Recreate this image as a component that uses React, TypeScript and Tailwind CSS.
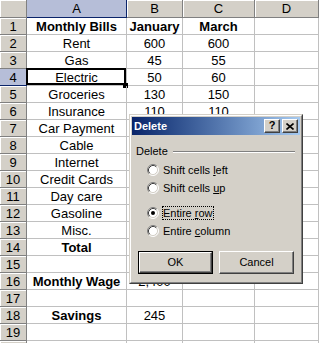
import React from "react";

type Row = { a: string; b?: string; c?: string; bold?: boolean };

const rows: Row[] = [
  { a: "Monthly Bills", b: "January", c: "March", bold: true },
  { a: "Rent", b: "600", c: "600" },
  { a: "Gas", b: "45", c: "55" },
  { a: "Electric", b: "50", c: "60" },
  { a: "Groceries", b: "130", c: "150" },
  { a: "Insurance", b: "110", c: "110" },
  { a: "Car Payment" },
  { a: "Cable" },
  { a: "Internet" },
  { a: "Credit Cards" },
  { a: "Day care" },
  { a: "Gasoline" },
  { a: "Misc." },
  { a: "Total", bold: true },
  { a: "" },
  { a: "Monthly Wage", b: "2,400", bold: true },
  { a: "" },
  { a: "Savings", b: "245", bold: true },
  { a: "" },
  { a: "" },
];

const cell = "box-border h-full border-r border-b border-[#c0c0c0] flex items-center justify-center whitespace-nowrap";
const head = "box-border h-full border-r border-b border-[#808080] bg-[#d4d0c8] shadow-[inset_1px_1px_0_#ffffff] flex items-center justify-center";
const headSel = "box-border h-full border-r border-b border-[#0a246a] bg-[#b6bed8] flex items-center justify-center";

function Radio({ checked }: { checked?: boolean }) {
  return (
    <svg width="12" height="12" viewBox="0 0 12 12" className="shrink-0">
      <circle cx="6" cy="6" r="5" fill="#ffffff" />
      <path d="M2.11 9.89 A5.5 5.5 0 0 1 9.89 2.11" fill="none" stroke="#808080" />
      <path d="M9.89 2.11 A5.5 5.5 0 0 1 2.11 9.89" fill="none" stroke="#ffffff" />
      <path d="M2.82 9.18 A4.5 4.5 0 0 1 9.18 2.82" fill="none" stroke="#404040" />
      <path d="M9.18 2.82 A4.5 4.5 0 0 1 2.82 9.18" fill="none" stroke="#d4d0c8" />
      {checked && <circle cx="6" cy="6" r="2" fill="#000000" />}
    </svg>
  );
}

function Option({ children, checked, focus }: { children: React.ReactNode; checked?: boolean; focus?: boolean }) {
  return (
    <div className="flex h-[16px] items-center gap-[3px] pl-[15px]">
      <Radio checked={checked} />
      <span
        className={
          "border leading-[12px] " + (focus ? "border-dotted border-black" : "border-transparent")
        }
      >
        {children}
      </span>
    </div>
  );
}

function DeleteDialog() {
  return (
    <div className="absolute left-[129px] top-[114px] w-[174px] h-[170px] border border-t-[#d4d0c8] border-l-[#d4d0c8] border-r-[#404040] border-b-[#404040] font-['Liberation_Sans',Arial,sans-serif] text-[11px] text-black">
      <div className="h-full border border-t-white border-l-white border-r-[#808080] border-b-[#808080] bg-[#d4d0c8] p-px flex flex-col">
        {/* Title bar */}
        <div className="h-[18px] shrink-0 flex items-center justify-between bg-gradient-to-r from-[#0a246a] to-[#a6caf0] pl-[2px] pr-[2px]">
          <span className="font-bold text-white leading-none">Delete</span>
          <div className="flex gap-[2px]">
            <div className="w-[16px] h-[14px] bg-[#d4d0c8] border border-t-white border-l-white border-r-[#404040] border-b-[#404040] shadow-[inset_-1px_-1px_0_#808080] flex items-center justify-center font-bold text-[11px] leading-none pb-px">
              ?
            </div>
            <div className="w-[16px] h-[14px] bg-[#d4d0c8] border border-t-white border-l-white border-r-[#404040] border-b-[#404040] shadow-[inset_-1px_-1px_0_#808080] flex items-center justify-center">
              <svg width="8" height="7" viewBox="0 0 8 7">
                <path d="M0.5 0.5 L7.5 6.5 M7.5 0.5 L0.5 6.5" stroke="#000000" strokeWidth="1.6" fill="none" />
              </svg>
            </div>
          </div>
        </div>

        {/* Group label */}
        <div className="mt-[10px] flex items-center gap-[5px] pl-[4px] pr-[5px] h-[13px]">
          <span className="leading-none">Delete</span>
          <div className="flex-1 border-t border-t-[#808080] border-b border-b-white" />
        </div>

        <div className="mt-[4px] flex flex-col gap-[2px]">
          <Option>
            Shift cells <span className="underline">l</span>eft
          </Option>
          <Option>
            Shift cells <span className="underline">u</span>p
          </Option>
        </div>
        <div className="mt-[9px] flex flex-col gap-[2px]">
          <Option checked focus>
            Entire <span className="underline">r</span>ow
          </Option>
          <Option>
            Entire <span className="underline">c</span>olumn
          </Option>
        </div>

        {/* Buttons */}
        <div className="mt-[12px] flex gap-[6px] pl-[6px]">
          <div className="w-[75px] h-[23px] border border-black">
            <div className="h-full border border-t-white border-l-white border-r-[#404040] border-b-[#404040] shadow-[inset_-1px_-1px_0_#808080] flex items-center justify-center">
              OK
            </div>
          </div>
          <div className="w-[75px] h-[23px] border border-t-white border-l-white border-r-[#404040] border-b-[#404040] shadow-[inset_-1px_-1px_0_#808080] flex items-center justify-center">
            Cancel
          </div>
        </div>
      </div>
    </div>
  );
}

export default function App() {
  return (
    <div className="relative w-[319px] h-[343px] overflow-hidden bg-white font-['Liberation_Sans',Arial,sans-serif] text-[13px] text-black leading-none">
      {/* Column headers */}
      <div className="flex h-[18px]">
        <div className={head + " w-[27px]"} />
        <div className={headSel + " w-[100px]"}>A</div>
        <div className={head + " w-[56px]"}>B</div>
        <div className={head + " w-[72px]"}>C</div>
        <div className={head + " w-[64px]"}>D</div>
      </div>

      {rows.map((r, i) => (
        <div key={i} className="flex h-[17px]">
          {/* row 20 only peeks in at the bottom edge, its number is off-screen */}
          <div className={(i === 3 ? headSel : head) + " w-[27px]"}>{i < 19 ? i + 1 : ""}</div>
          <div className={cell + " w-[100px] relative" + (r.bold ? " font-bold" : "")}>
            {r.a}
            {i === 3 && (
              <>
                <div className="absolute -left-px -top-px right-0 bottom-0 border-2 border-black" />
                <div className="absolute -right-[2px] -bottom-[3px] w-[5px] h-[5px] bg-black" />
              </>
            )}
          </div>
          <div className={cell + " w-[56px]" + (i === 0 ? " font-bold" : "")}>{r.b}</div>
          <div className={cell + " w-[72px]" + (i === 0 ? " font-bold" : "")}>{r.c}</div>
          <div className={cell + " w-[64px]"} />
        </div>
      ))}

      <DeleteDialog />
    </div>
  );
}
